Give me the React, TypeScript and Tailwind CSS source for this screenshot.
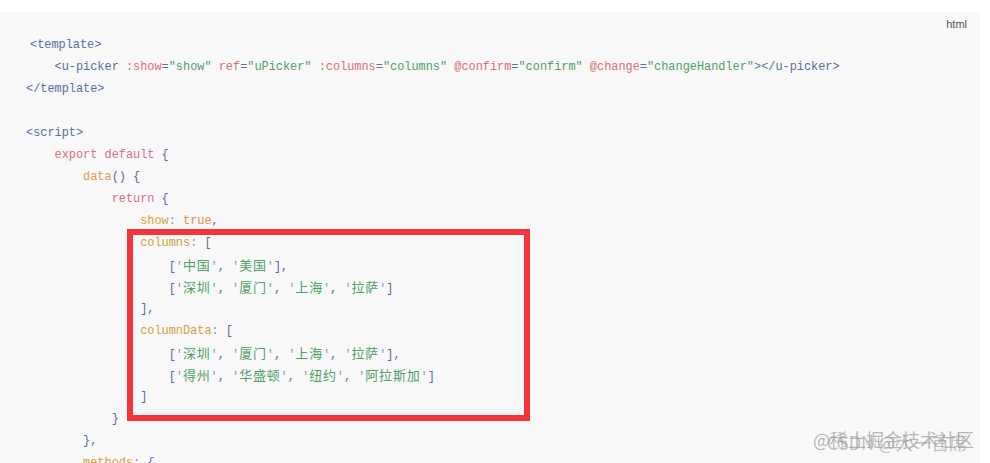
import React from "react";

type Tok = [string, string];

const c = {
  tag: "text-[#5a6d9d]",
  attr: "text-[#dd6e70]",
  str: "text-[#4f9e68]",
  kw: "text-[#d6717b]",
  fn: "text-[#e29b55]",
  prop: "text-[#d3a03a]",
  lit: "text-[#df8b4e]",
  p: "text-[#5a6d9d]",
  q: "text-[#8a97b5]",
};

// CJK glyphs are wider in the original font, so they get their own size
function Cjk({ text }: { text: string }) {
  return (
    <span className="text-[13px] tracking-[0.8px] font-['Noto_Sans_CJK_SC',sans-serif]">
      {text}
    </span>
  );
}

function arr(items: string[], tail: string): Tok[] {
  const out: Tok[] = [[c.p, "["]];
  items.forEach((it, i) => {
    out.push([c.q, "'"]);
    out.push(["cjk", it]);
    out.push([c.q, "'"]);
    if (i < items.length - 1) out.push([c.p, ", "]);
  });
  out.push([c.p, "]" + tail]);
  return out;
}

const lines: { indent: number; toks: Tok[]; extra?: string }[] = [
  { indent: 0, toks: [[c.tag, "<template>"]], extra: "ml-[4px]" },
  {
    indent: 1,
    toks: [
      [c.tag, "<u-picker "],
      [c.attr, ":show"],
      [c.tag, "="],
      [c.str, '"show"'],
      [c.tag, " "],
      [c.attr, "ref"],
      [c.tag, "="],
      [c.str, '"uPicker"'],
      [c.tag, " "],
      [c.attr, ":columns"],
      [c.tag, "="],
      [c.str, '"columns"'],
      [c.tag, " "],
      [c.attr, "@confirm"],
      [c.tag, "="],
      [c.str, '"confirm"'],
      [c.tag, " "],
      [c.attr, "@change"],
      [c.tag, "="],
      [c.str, '"changeHandler"'],
      [c.tag, "></u-picker>"],
    ],
  },
  { indent: 0, toks: [[c.tag, "</template>"]] },
  { indent: 0, toks: [] },
  { indent: 0, toks: [[c.tag, "<script>"]] },
  { indent: 1, toks: [[c.kw, "export default "], [c.p, "{"]] },
  { indent: 2, toks: [[c.fn, "data"], [c.p, "() {"]] },
  { indent: 3, toks: [[c.kw, "return "], [c.p, "{"]] },
  { indent: 4, toks: [[c.prop, "show"], [c.q, ": "], [c.lit, "true"], [c.p, ","]] },
  { indent: 4, toks: [[c.prop, "columns"], [c.q, ": "], [c.p, "["]] },
  { indent: 5, toks: arr(["中国", "美国"], ",") },
  { indent: 5, toks: arr(["深圳", "厦门", "上海", "拉萨"], "") },
  { indent: 4, toks: [[c.p, "],"]] },
  { indent: 4, toks: [[c.prop, "columnData"], [c.q, ": "], [c.p, "["]] },
  { indent: 5, toks: arr(["深圳", "厦门", "上海", "拉萨"], ",") },
  { indent: 5, toks: arr(["得州", "华盛顿", "纽约", "阿拉斯加"], "") },
  { indent: 4, toks: [[c.p, "]"]] },
  { indent: 3, toks: [[c.p, "}"]] },
  { indent: 2, toks: [[c.p, "},"]] },
  { indent: 2, toks: [[c.prop, "methods"], [c.q, ": "], [c.p, "{"]] },
];

export default function App() {
  return (
    <div className="h-[463px] w-[990px] overflow-hidden bg-white">
      <div className="relative mt-[12px] w-[980px] h-[451px] bg-[#f8f8f9] pt-[22px] pl-[26px]">
        <span className="absolute right-[13px] top-[4px] text-[11px] text-[#555] font-['Liberation_Sans',Arial,sans-serif]">
          html
        </span>
        <div className="font-['Liberation_Mono','Noto_Sans_CJK_SC',monospace] text-[11.9px]">
          {lines.map((ln, i) => (
            <div key={i} className={`h-[22px] leading-[22px] whitespace-pre ${ln.extra ?? ""}`}>
              {"    ".repeat(ln.indent)}
              {ln.toks.map(([cls, t], j) =>
                cls === "cjk" ? (
                  <span key={j} className={c.str}>
                    <Cjk text={t} />
                  </span>
                ) : (
                  <span key={j} className={cls}>
                    {t}
                  </span>
                )
              )}
            </div>
          ))}
        </div>

        {/* highlight box */}
        <div className="absolute left-[127px] top-[217px] w-[403px] h-[192px] border-[6px] border-[#f5333b] pointer-events-none" />

        {/* watermarks */}
        <span className="absolute left-[813px] top-[414px] text-[18px] text-[#9a9a9a]/70 font-['Noto_Sans_CJK_SC',sans-serif] whitespace-nowrap">
          @稀土掘金技术社区
        </span>
        <span className="absolute left-[827px] top-[417px] text-[18px] text-[#9a9a9a]/60 font-['Noto_Sans_CJK_SC',sans-serif] whitespace-nowrap">
          CSDN @大一首席
        </span>
      </div>
    </div>
  );
}
